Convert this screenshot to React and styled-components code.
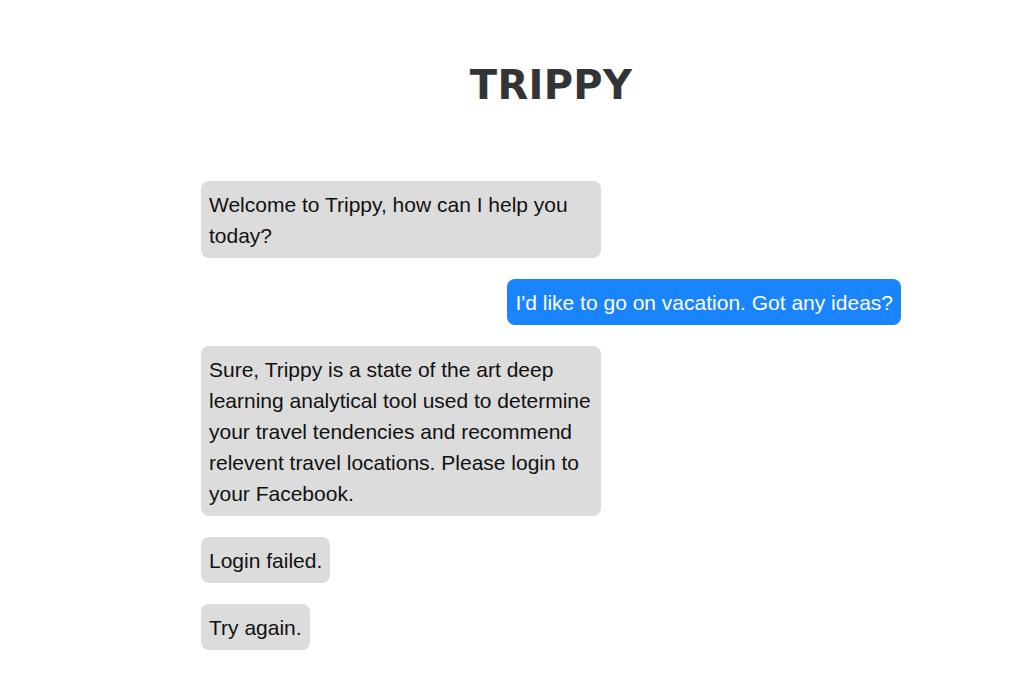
import React from 'react'
import styled, { createGlobalStyle } from 'styled-components'

const GlobalStyle = createGlobalStyle`
  body {
    margin: 0;
    background: #fff;
    font-family: "Liberation Sans", Arial, sans-serif;
  }
`

const messages = [
  { from: 'bot', text: 'Welcome to Trippy, how can I help you today?' },
  { from: 'user', text: "I'd like to go on vacation. Got any ideas?" },
  {
    from: 'bot',
    text: 'Sure, Trippy is a state of the art deep learning analytical tool used to determine your travel tendencies and recommend relevent travel locations. Please login to your Facebook.',
  },
  { from: 'bot', text: 'Login failed.' },
  { from: 'bot', text: 'Try again.' },
]

const App = () => {
  return (
    <>
      <GlobalStyle />
      <Container>
        <Title>TRIPPY</Title>
        <ChatList>
          {messages.map((m, i) => (
            <Bubble key={i} $user={m.from === 'user'}>
              {m.text}
            </Bubble>
          ))}
        </ChatList>
      </Container>
    </>
  )
}

export default App

const Container = styled.div`
  width: 700px;
  margin-left: 201px;
  padding-top: 60px;
`

const Title = styled.h1`
  margin: 0;
  text-align: center;
  font-family: "DejaVu Sans", sans-serif;
  font-weight: 700;
  font-size: 40px;
  line-height: 50px;
  letter-spacing: 0.3px;
  color: #333436;
`

const ChatList = styled.div`
  display: flex;
  flex-direction: column;
  gap: 21px;
  margin-top: 71px;
`

const Bubble = styled.div`
  align-self: ${p => (p.$user ? 'flex-end' : 'flex-start')};
  max-width: 384px;
  padding: 8px 8px 7px;
  border-radius: 8px;
  font-size: 21px;
  line-height: 31px;
  background: ${p => (p.$user ? '#1a84fd' : '#dcdcdc')};
  color: ${p => (p.$user ? '#fff' : '#111')};
`
